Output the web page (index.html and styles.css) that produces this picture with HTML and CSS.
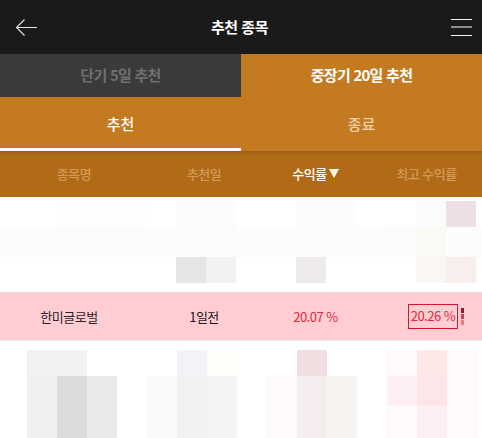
FILE: index.html
```html
<!DOCTYPE html>
<html lang="ko">
<head>
<meta charset="utf-8">
<title>추천 종목</title>
<link rel="stylesheet" href="styles.css">
</head>
<body>
<div class="page">
  <header class="top">
    <svg class="back" width="23" height="17" viewBox="0 0 23 17"><path d="M22 8.500H1.500M9.500.5 1.500 8.500l8 8" fill="none" stroke="#e4e4e4" stroke-width="1.100"/></svg>
    <h1 class="title">추천 종목</h1>
    <div class="menu"><span class="line"></span><span class="line dim"></span><span class="line"></span></div>
  </header>
  <nav class="term">
    <div class="term-item off">단기 5일 추천</div>
    <div class="term-item on">중장기 20일 추천</div>
  </nav>
  <nav class="sub">
    <div class="sub-item active">추천</div>
    <div class="sub-item">종료</div>
  </nav>
  <div class="cols head">
    <div>종목명</div>
    <div>추천일</div>
    <div class="sorted">수익률<span class="tri"></span></div>
    <div>최고 수익률</div>
  </div>
  <div class="mosaic top-mosaic">
    <div class="m-row r26">
      <i></i><i class="a1"></i><i class="a1"></i><i class="a1"></i><i></i><i class="a2"></i><i class="a2"></i><i></i><i></i><i class="a3"></i><i class="a3"></i><i></i><i></i><i class="a2"></i><i class="a4"></i>
    </div>
    <div class="m-row r30 band">
      <i></i><i class="a2"></i><i></i><i></i><i></i><i class="a2"></i><i class="a2"></i><i></i><i></i><i class="a3"></i><i class="a3"></i><i></i><i class="a2"></i><i class="a5"></i><i></i>
    </div>
    <div class="m-row r26">
      <i></i><i></i><i></i><i></i><i></i><i class="a6"></i><i class="a7"></i><i></i><i></i><i class="a8"></i><i></i><i></i><i></i><i class="a9"></i><i class="a10"></i>
    </div>
  </div>
  <div class="cols item">
    <div class="name">한미글로벌</div>
    <div class="date">1일전</div>
    <div class="rate">20.07 %</div>
    <div class="rate best-wrap"><span class="best">20.26 %</span><span class="level"><b class="l1"></b><b class="l2"></b><b class="l3"></b></span></div>
  </div>
  <div class="mosaic low-mosaic">
    <div class="m-row r26">
      <i class="b1"></i><i class="b1"></i><i></i><i></i><i></i><i class="b2"></i><i class="b3"></i><i></i><i></i><i class="b4"></i><i></i><i></i><i class="b5"></i><i class="b6"></i><i class="b5"></i>
    </div>
    <div class="m-row r30">
      <i class="b7"></i><i class="b8"></i><i class="b9"></i><i></i><i class="b10"></i><i class="b11"></i><i class="b12"></i><i></i><i class="b13"></i><i class="b14"></i><i class="b15"></i><i></i><i class="b16"></i><i class="b17"></i><i class="b5"></i>
    </div>
    <div class="m-row r32">
      <i class="b7"></i><i class="b8"></i><i class="b9"></i><i></i><i class="b10"></i><i class="b11"></i><i class="b12"></i><i></i><i class="b13"></i><i class="b14"></i><i class="b15"></i><i></i><i class="b5"></i><i class="b16"></i><i class="b5"></i>
    </div>
  </div>
</div>
</body>
</html>
```
FILE: styles.css
```css
* { box-sizing: border-box; }
html, body { margin: 0; padding: 0; background: #fff; }
body { font-family: "Noto Sans CJK KR", "Noto Sans", sans-serif; overflow: hidden; }
.page { width: 482px; height: 438px; overflow: hidden; }

.top { height: 54px; background: #1a1a1a; display: grid; grid-template-columns: 1fr auto 1fr; align-items: center; padding: 0 10px; }
.back { display: block; margin-left: 5px; }
.title { margin: 0 3px 0 0; font-size: 15px; font-weight: 700; color: #fff; letter-spacing: -0.5px; line-height: 20px; }
.menu { width: 21px; height: 17px; justify-self: end; display: flex; flex-direction: column; justify-content: space-between; }
.line { display: block; height: 1px; background: #f2f2f2; }
.line.dim { height: 2px; background: #8e8e8e; }

.term { height: 43px; display: grid; grid-template-columns: 241px 241px; }
.term-item { display: flex; align-items: center; justify-content: center; font-size: 15px; font-weight: 700; letter-spacing: -0.75px; padding-bottom: 2px; }
.term-item.off { background: #3a3a3a; color: #6f6f6f; }
.term-item.on { background: #c47a21; color: #fff; }

.sub { height: 54px; display: grid; grid-template-columns: 241px 241px; background: #c47a21; box-shadow: 0 2px 3px rgba(90, 50, 0, .25); position: relative; }
.sub-item { display: flex; align-items: center; justify-content: center; font-size: 15px; font-weight: 500; color: #eecfa6; padding-bottom: 1px; }
.sub-item.active { color: #fff; border-bottom: 3px solid #fff; padding: 2px 0 0; }

.cols { display: grid; grid-template-columns: 148px 112px 111px 111px; align-items: center; text-align: center; letter-spacing: -0.5px; }
.head { height: 46px; background: #b16b17; color: #d59a59; font-size: 13px; font-weight: 500; padding-bottom: 2px; }
.sorted { color: #fff; display: flex; align-items: center; justify-content: center; gap: 2px; }
.tri { width: 0; height: 0; border-left: 5px solid transparent; border-right: 5px solid transparent; border-top: 9px solid #fff; }

.mosaic { background: #fff; }
.top-mosaic { height: 95px; padding-top: 4px; }
.low-mosaic { height: 97px; padding-top: 9px; }
.low-mosaic .m-row { padding-left: 27px; }
.m-row { display: grid; grid-template-columns: repeat(15, 30px); padding-left: 26px; }
.r26 { height: 26px; }
.r30 { height: 30px; }
.r32 { height: 32px; }
.band { background: #fcfcfb; }
.a1 { background: #fffdfd; }
.a2 { background: #fcfbfb; }
.a3 { background: #fbfcfc; }
.a4 { background: #eee0e2; }
.a5 { background: #f8faf4; }
.a6 { background: #e5e5e5; }
.a7 { background: #f2f2f2; }
.a8 { background: #eeeaea; }
.a9 { background: #faf6f3; }
.a10 { background: #f8eeec; }
.b1 { background: #f2f2f5; }
.b2 { background: #f2f3f8; }
.b3 { background: #fffefa; }
.b4 { background: #f0dfe1; }
.b5 { background: #fffafa; }
.b6 { background: #fde7e7; }
.b7 { background: #f0f0ef; }
.b8 { background: #dcdddb; }
.b9 { background: #e9e9e8; }
.b10 { background: #fafafa; }
.b11 { background: #f0f1f1; }
.b12 { background: #f3f4f4; }
.b13 { background: #fffafa; }
.b14 { background: #f6edee; }
.b15 { background: #f7f3f1; }
.b16 { background: #fef0f2; }
.b17 { background: #fee6e8; }

.item { height: 49px; background: #ffcdd2; font-size: 13px; border-top: 1px solid #f4d6da; border-bottom: 1px solid #f1e4e6; color: #2b2326; }
.name { padding-right: 10px; }
.date { font-weight: 400; color: #1d1618; }
.rate { color: #e0283c; }
.best-wrap { display: flex; align-items: center; justify-content: flex-start; padding-left: 37px; gap: 3px; margin-right: -1px; }
.best { display: block; width: 50px; height: 25px; line-height: 22px; border: 1px solid #d5162e; white-space: nowrap; text-align: center; }
.level { display: flex; flex-direction: column; gap: 1px; width: 3px; }
.level b { display: block; height: 5px; }
.l1 { background: #8c1c2b; }
.l2 { background: #c4454f; }
.l3 { background: #f57b70; }
```
